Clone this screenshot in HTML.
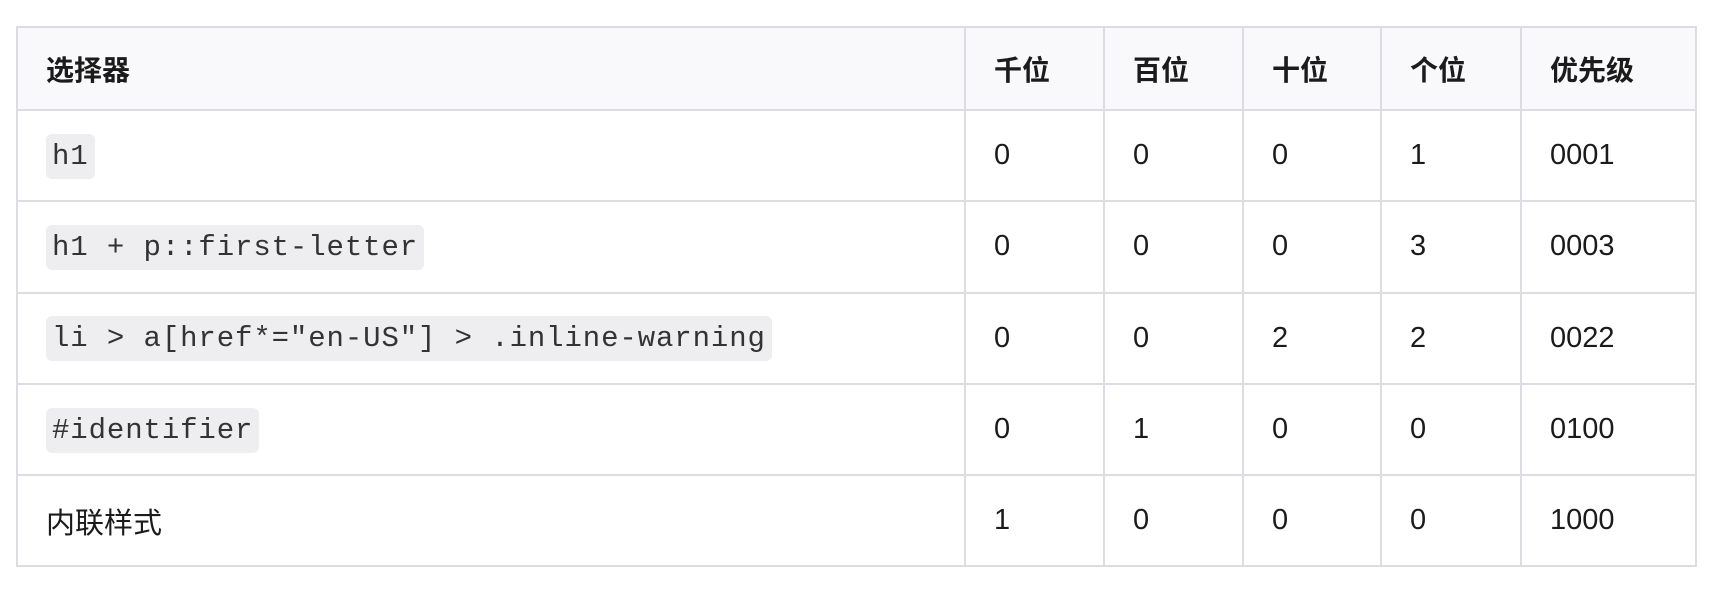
<!DOCTYPE html>
<html><head><meta charset="utf-8"><style>
body{margin:0;background:#fff;width:1726px;height:594px;overflow:hidden;font-family:"Liberation Sans","Noto Sans CJK SC",sans-serif;color:#1b1b1b}
table{position:absolute;left:16px;top:26px;border-collapse:collapse;width:1681px;table-layout:fixed}
td,th{border:2px solid #dcdce3;text-align:left;padding:0 0 0 28px;font-size:29px;vertical-align:middle}
th{background:#f9f9fb;height:81px;font-weight:bold;font-size:28px}
td{height:89.3px}
code{font-family:"Liberation Mono",monospace;font-size:29px;letter-spacing:0.9px;background:#eeeef1;border-radius:6px;padding:6px 6px;color:#333}
</style></head><body>
<table>
<colgroup><col style="width:948px"><col style="width:139px"><col style="width:139px"><col style="width:138px"><col style="width:140px"><col></colgroup>
<tr><th>选择器</th><th>千位</th><th>百位</th><th>十位</th><th>个位</th><th>优先级</th></tr>
<tr><td><code>h1</code></td><td>0</td><td>0</td><td>0</td><td>1</td><td>0001</td></tr>
<tr><td><code>h1 + p::first-letter</code></td><td>0</td><td>0</td><td>0</td><td>3</td><td>0003</td></tr>
<tr><td><code>li &gt; a[href*="en-US"] &gt; .inline-warning</code></td><td>0</td><td>0</td><td>2</td><td>2</td><td>0022</td></tr>
<tr><td><code>#identifier</code></td><td>0</td><td>1</td><td>0</td><td>0</td><td>0100</td></tr>
<tr><td>内联样式</td><td>1</td><td>0</td><td>0</td><td>0</td><td>1000</td></tr>
</table>
</body></html>
